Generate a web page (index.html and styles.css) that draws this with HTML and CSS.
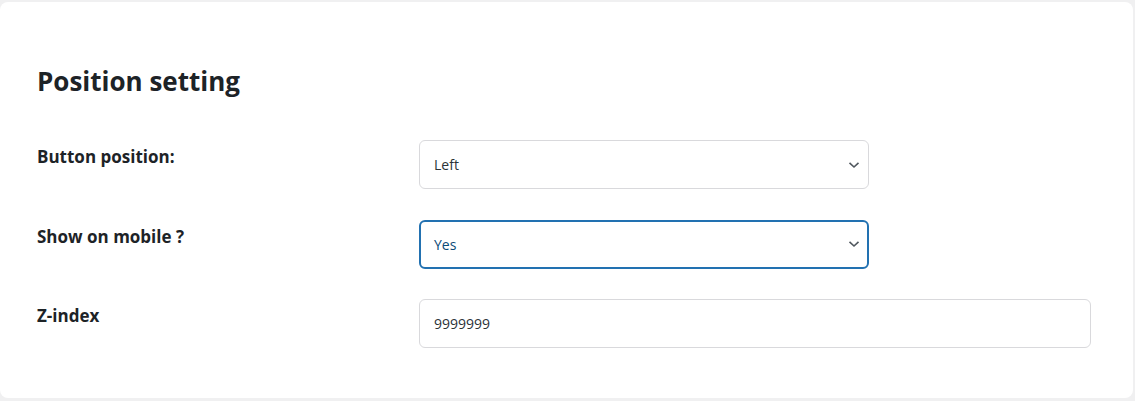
FILE: index.html
```html
<!DOCTYPE html>
<html lang="en">
<head>
<meta charset="utf-8">
<title>Position setting</title>
<link rel="stylesheet" href="styles.css">
</head>
<body>
<div class="card">
  <h2 class="title">Position setting</h2>
  <div class="form">
    <div class="label">Button position:</div>
    <div class="field">
      <div class="select">
        <span class="value">Left</span>
        <svg class="chev" width="12" height="8" viewBox="0 0 12 8"><path d="M1.5 1.8 L6 6 L10.5 1.8" fill="none" stroke="#50575e" stroke-width="1.6"/></svg>
      </div>
    </div>
    <div class="label">Show on mobile ?</div>
    <div class="field">
      <div class="select focused">
        <span class="value">Yes</span>
        <svg class="chev" width="12" height="8" viewBox="0 0 12 8"><path d="M1.5 1.8 L6 6 L10.5 1.8" fill="none" stroke="#50575e" stroke-width="1.6"/></svg>
      </div>
    </div>
    <div class="label">Z-index</div>
    <div class="field">
      <div class="input"><span class="value">9999999</span></div>
    </div>
  </div>
</div>
</body>
</html>
```

FILE: styles.css
```css
html, body {
  margin: 0;
  padding: 0;
}
body {
  background: #f0f0f1;
  font-family: "Open Sans", "Noto Sans", sans-serif;
  color: #1d2327;
  padding: 2px 2px 3px 0;
}
.card {
  background: #fff;
  border-radius: 8px;
  height: 396px;
  box-sizing: border-box;
  padding: 62px 42px 0 37px;
}
.title {
  margin: 0 0 42px 0;
  font-size: 26px;
  line-height: 34px;
  font-weight: 700;
}
.form {
  display: grid;
  grid-template-columns: 382px 1fr;
  row-gap: 30.5px;
}
.label {
  font-size: 17px;
  font-weight: 700;
  line-height: 22px;
  padding-top: 6px;
}
.select, .input {
  box-sizing: border-box;
  height: 49px;
  border: 1px solid #d9d9dc;
  border-radius: 6px;
  display: flex;
  align-items: center;
  padding: 0 8px 0 14px;
  font-size: 14px;
  color: #2c3338;
}
.select {
  width: 450px;
  justify-content: space-between;
}
.select.focused {
  border: 2px solid #2271b1;
  padding-left: 13px;
  padding-right: 7px;
  color: #0a4b78;
}
.input {
  width: 100%;
}
.chev {
  display: block;
}
```
